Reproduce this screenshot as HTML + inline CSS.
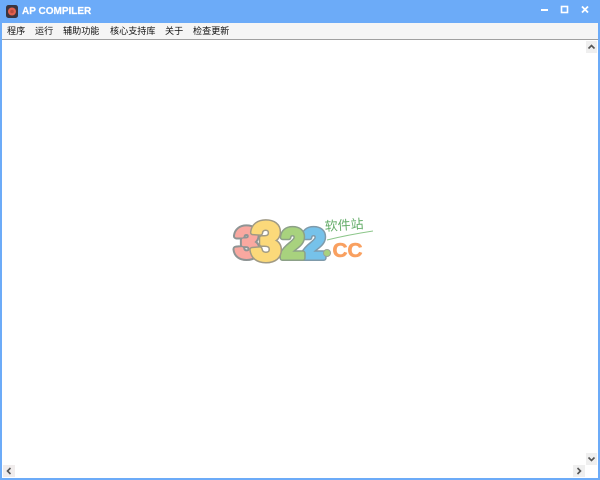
<!DOCTYPE html>
<html>
<head>
<meta charset="utf-8">
<style>
html,body{margin:0;padding:0;width:600px;height:480px;overflow:hidden;background:#fff}
body{position:relative;font-family:"Liberation Sans","Noto Sans CJK SC",sans-serif}
.a{position:absolute}
.title{left:0;top:0;width:600px;height:23px;background:#6cabf8}
.bl{left:0;top:23px;width:2px;height:457px;background:#6cabf8}
.br{left:598px;top:23px;width:2px;height:457px;background:#6cabf8}
.bb{left:0;top:478px;width:600px;height:2px;background:#6cabf8}
.menu{left:2px;top:23px;width:596px;height:16px;background:#f5f5f5;border-bottom:1px solid #a0a0a0;}
.t{left:22px;top:5px;font-size:10px;font-weight:bold;color:#fff;line-height:14px;letter-spacing:0;-webkit-text-stroke:0.2px #fff}
.m{top:24px;font-size:9.1px;line-height:14px;color:#111;white-space:nowrap}
.sb{background:#efefef;width:11px;height:12px}
</style>
</head>
<body>
<div class="a title"></div>
<div class="a bl"></div>
<div class="a br"></div>
<div class="a bb"></div>
<div class="a menu"></div>

<svg class="a" style="left:6px;top:5px" width="12" height="13" viewBox="0 0 12 13">
<rect x="0" y="0" width="12" height="13" rx="2.5" fill="#3a3540"/>
<circle cx="6" cy="6.5" r="4" fill="#e0604f"/>
<circle cx="6" cy="6.5" r="1.8" fill="#b84a3e"/>
</svg>
<div class="a t">AP COMPILER</div>

<svg class="a" style="left:520px;top:0" width="80" height="23" viewBox="0 0 80 23">
<rect x="21" y="9" width="7" height="2" fill="#fff"/>
<rect x="41.5" y="6.5" width="6" height="6" fill="none" stroke="#fff" stroke-width="1.6"/>
<path d="M62 6.5L68 12.5M68 6.5L62 12.5" stroke="#fff" stroke-width="1.8" fill="none"/>
</svg>

<div class="a m" style="left:7px">程序</div>
<div class="a m" style="left:35px">运行</div>
<div class="a m" style="left:63px">辅助功能</div>
<div class="a m" style="left:110px">核心支持库</div>
<div class="a m" style="left:165px">关于</div>
<div class="a m" style="left:193px">检查更新</div>

<div class="a sb" style="left:586px;top:41px"></div>
<svg class="a" style="left:586px;top:41px" width="11" height="12"><path d="M2.5 7.500L5.500 4.500L8.500 7.500" fill="none" stroke="#555" stroke-width="1.6"/></svg>
<div class="a sb" style="left:586px;top:453px"></div>
<svg class="a" style="left:586px;top:453px" width="11" height="12"><path d="M2.500 4.500L5.500 7.500L8.500 4.500" fill="none" stroke="#555" stroke-width="1.6"/></svg>
<div class="a sb" style="left:3px;top:465px;height:12px;width:12px;background:#f0ecec"></div>
<svg class="a" style="left:3px;top:465px" width="12" height="12"><path d="M7.500 3L4.500 6L7.500 9" fill="none" stroke="#555" stroke-width="1.6"/></svg>
<div class="a sb" style="left:573px;top:465px;height:12px;width:12px"></div>
<svg class="a" style="left:573px;top:465px" width="12" height="12"><path d="M4.500 3L7.500 6L4.500 9" fill="none" stroke="#555" stroke-width="1.6"/></svg>

<svg class="a" style="left:225px;top:210px" width="150" height="60" viewBox="0 0 150 60">
<g font-family="Liberation Sans" font-weight="bold" stroke-linejoin="round">
<g font-size="42">
<text x="10" y="47" fill="none" stroke="#8e9494" stroke-width="7">3</text>
<text x="10" y="47" fill="#f9a8a0" stroke="#f9a8a0" stroke-width="3">3</text>
</g>
<g font-size="42">
<text x="77" y="48" fill="none" stroke="#7f9aaa" stroke-width="6">2</text>
<text x="77" y="48" fill="#76c2ea" stroke="#76c2ea" stroke-width="3">2</text>
<text x="56" y="48" fill="none" stroke="#8ca088" stroke-width="6">2</text>
<text x="56" y="48" fill="#a8d27e" stroke="#a8d27e" stroke-width="3">2</text>
</g>
<g font-size="54">
<text x="26" y="50" fill="none" stroke="#a09a84" stroke-width="6">3</text>
<text x="26" y="50" fill="#fbd97a" stroke="#fbd97a" stroke-width="3">3</text>
</g>
<circle cx="102" cy="43" r="3.5" fill="#a8d27e" stroke="#9aa39a" stroke-width="1"/>
<text x="107.500" y="47" font-size="20" fill="#f9a060" stroke="#f9a060" stroke-width="0.6" textLength="30" lengthAdjust="spacingAndGlyphs">CC</text>
</g>
<text x="100" y="21" font-size="13" fill="#65ad6a" font-family="Liberation Sans,Noto Sans CJK SC,sans-serif" textLength="39" transform="rotate(-4 100 21)">软件站</text>
<path d="M102 30Q122 25 148 21" fill="none" stroke="#8cc68a" stroke-width="1"/>
</svg>
</body>
</html>
